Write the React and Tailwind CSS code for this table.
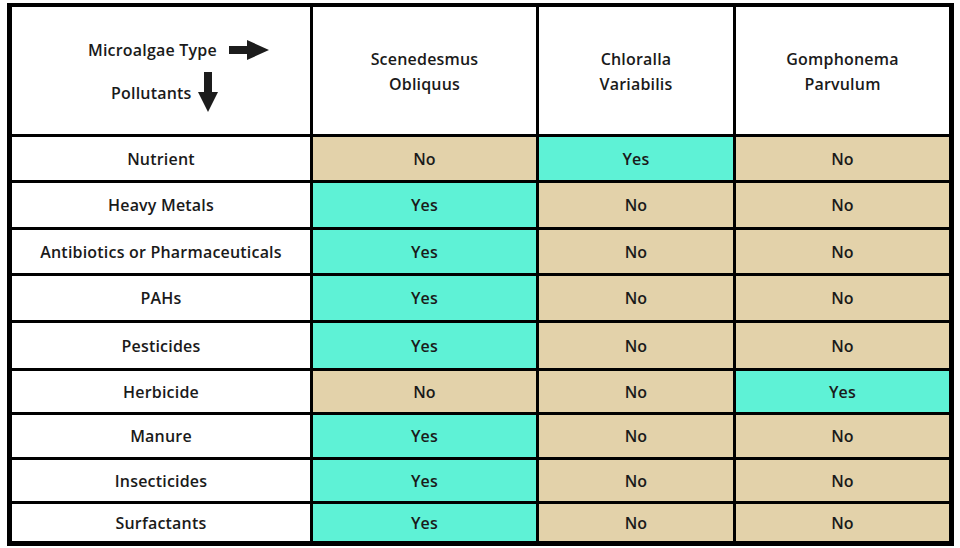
const columns = [
  ["Scenedesmus", "Obliquus"],
  ["Chloralla", "Variabilis"],
  ["Gomphonema", "Parvulum"],
];

const rows = [
  { name: "Nutrient", h: "h-[43px]", v: [0, 1, 0] },
  { name: "Heavy Metals", h: "h-[44px]", v: [1, 0, 0] },
  { name: "Antibiotics or Pharmaceuticals", h: "h-[43px]", v: [1, 0, 0] },
  { name: "PAHs", h: "h-[44px]", v: [1, 0, 0] },
  { name: "Pesticides", h: "h-[45px]", v: [1, 0, 0] },
  { name: "Herbicide", h: "h-[41px]", v: [0, 0, 1] },
  { name: "Manure", h: "h-[42px]", v: [1, 0, 0] },
  { name: "Insecticides", h: "h-[41px]", v: [1, 0, 0] },
  { name: "Surfactants", h: "h-[37px]", v: [1, 0, 0] },
];

const RightArrow = () => (
  <svg width="40" height="20" viewBox="0 0 40 20" className="block">
    <path d="M0 6 H18 V0 L40 10 L18 20 V14 H0 Z" fill="#1c1c1c" />
  </svg>
);

const DownArrow = () => (
  <svg width="20" height="40" viewBox="0 0 20 40" className="block">
    <path d="M6 0 H14 V20 H20 L10 40 L0 20 H6 Z" fill="#1c1c1c" />
  </svg>
);

export default function App() {
  return (
    <div
      className="w-[960px] h-[548px] bg-white pl-[7px] pt-[3px] text-[#1a1a1a]"
      style={{ fontFamily: '"Open Sans", "Noto Sans", sans-serif' }}
    >
      <div className="inline-grid grid-cols-[298px_223px_194px_213px] gap-[3px] bg-black border-black border-l-[5px] border-r-[5px] border-t-[4px] border-b-[5px] text-[16px] font-semibold tracking-[0.2px]">
        <div className="h-[127px] bg-white pt-[31px]">
          <div className="flex items-center pl-[76px] gap-[12px]">
            <span>Microalgae Type</span>
            <RightArrow />
          </div>
          <div className="flex items-start pl-[99px] gap-[6px] mt-[10px]">
            <span className="mt-[9px]">Pollutants</span>
            <DownArrow />
          </div>
        </div>
        {columns.map((c) => (
          <div
            key={c[0]}
            className="h-[127px] bg-white flex flex-col items-center justify-center leading-[25px] pt-[2px]"
          >
            <span>{c[0]}</span>
            <span>{c[1]}</span>
          </div>
        ))}
        {rows.map((r) => (
          <div key={r.name} className="contents">
            <div className={`${r.h} bg-white flex items-center justify-center`}>
              {r.name}
            </div>
            {r.v.map((v, i) =>
              v ? (
                <div
                  key={i}
                  className={`${r.h} bg-[#5ef2d6] flex items-center justify-center`}
                >
                  Yes
                </div>
              ) : (
                <div
                  key={i}
                  className={`${r.h} bg-[#e3d2aa] flex items-center justify-center`}
                >
                  No
                </div>
              )
            )}
          </div>
        ))}
      </div>
    </div>
  );
}
